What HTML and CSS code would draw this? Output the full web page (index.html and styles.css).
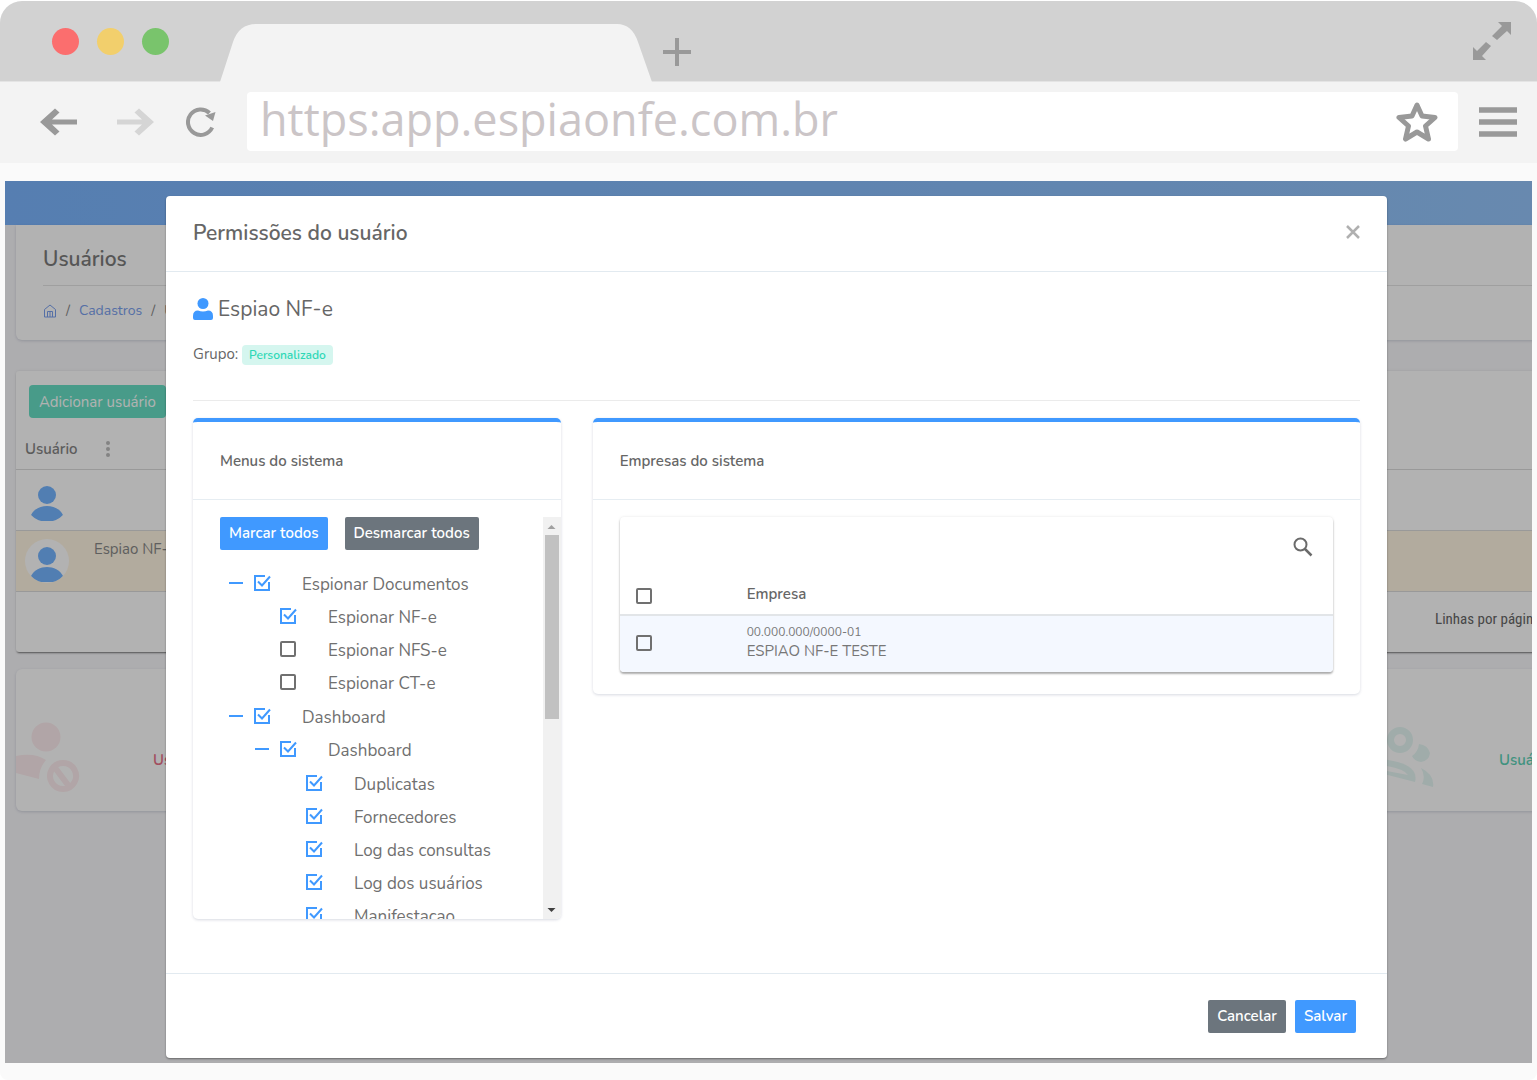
FILE: index.html
```html
<!DOCTYPE html>
<html lang="pt-BR">
<head>
<meta charset="utf-8">
<title>Permissões do usuário</title>
<link rel="stylesheet" href="styles.css">
</head>
<body>
<svg class="defs" aria-hidden="true">
  <symbol id="person" viewBox="0 0 44 44">
    <circle cx="22" cy="17" r="9"/>
    <path d="M6 37C12 25 32 25 38 37C35 41 32 43 28 43H16C12 43 9 41 6 37Z"/>
  </symbol>
</svg>

<div class="browser">
  <div class="tabstrip">
    <span class="dot dot-red"></span>
    <span class="dot dot-yellow"></span>
    <span class="dot dot-green"></span>
    <svg class="tab" viewBox="0 0 432 58"><path d="M0 58L13 18Q19 0 36 0H397Q412 0 418 18L432 58Z"/></svg>
    <button class="chrome-btn plus" aria-label="Nova aba">
      <svg width="28" height="28" viewBox="0 0 28 28"><path d="M14 0V28M0 14H28" stroke="#999" stroke-width="4"/></svg>
    </button>
    <button class="chrome-btn expand" aria-label="Tela cheia">
      <svg width="38" height="38" viewBox="0 0 38 38" fill="#999"><path d="M25 0H38V13L34 9L24 18L19 14L29 4Z"/><path d="M13 38H0V25L4 29L13 20L18 24L9 34Z"/></svg>
    </button>
  </div>

  <div class="toolbar">
    <button class="chrome-btn" aria-label="Voltar">
      <svg width="37" height="28" viewBox="0 0 37 28"><path d="M0 14L15 0.500L19.500 4.500L12 11.500H37V16.500H12L19.500 23.500L15 27.500Z" fill="#999"/></svg>
    </button>
    <button class="chrome-btn forward" aria-label="Avançar">
      <svg width="37" height="28" viewBox="0 0 37 28"><path d="M37 14L22 0.500L17.500 4.500L25 11.500H0V16.500H25L17.500 23.500L22 27.500Z" fill="#d5d5d5"/></svg>
    </button>
    <button class="chrome-btn reload" aria-label="Recarregar">
      <svg width="30" height="30" viewBox="0 0 30 30"><path d="M26.200 20.500A12.700 12.700 0 1 1 23.500 6" fill="none" stroke="#999" stroke-width="4"/><path d="M29.500 5L27 14L19 8.500Z" fill="#999"/></svg>
    </button>
    <div class="address">
      <input class="url" type="text" value="https:app.espiaonfe.com.br" aria-label="Endereço">
      <svg width="42" height="41" viewBox="0 0 42 41"><path d="M21 4L26 15L39 16.500L29.500 25L32.500 38L21 31L9.500 38L12.500 25L3 16.500L16 15Z" fill="none" stroke="#999" stroke-width="5" stroke-linejoin="round"/></svg>
    </div>
    <button class="chrome-btn menu" aria-label="Menu">
      <svg width="38" height="30" viewBox="0 0 38 30"><path d="M0 3H38M0 15H38M0 27H38" stroke="#999" stroke-width="5.500"/></svg>
    </button>
  </div>

  <div class="viewport">
    <div class="app">
      <header class="topbar"></header>
      <main class="page">
        <section class="panel page-head">
          <h1>Usuários</h1>
          <nav class="crumbs">
            <a href="#" aria-label="Início"><svg width="14" height="14" viewBox="0 0 14 14" fill="none" stroke="currentColor" stroke-linejoin="round"><path d="M1.500 5.500L7 1L12.500 5.500V13H1.500ZM4.500 13V7.500H9.500V13M7 8V13"/></svg></a>
            <span>/</span><a href="#">Cadastros</a><span>/</span><span>Usuários</span>
          </nav>
        </section>

        <section class="panel users">
          <button class="add">Adicionar usuário</button>
          <div class="users-head">
            <span>Usuário</span>
            <svg width="4" height="16" viewBox="0 0 4 16" fill="#bcbcbc"><circle cx="2" cy="2" r="2"/><circle cx="2" cy="8" r="2"/><circle cx="2" cy="14" r="2"/></svg>
          </div>
          <div class="user-row">
            <svg class="avatar"><use href="#person"/></svg>
          </div>
          <div class="user-row selected">
            <svg class="avatar"><use href="#person"/></svg>
            <span>Espiao NF-e</span>
          </div>
          <div class="pager">Linhas por página</div>
        </section>

        <section class="stats">
          <article class="panel stat stat-red">
            <svg width="64" height="72" viewBox="0 0 64 72" fill="currentColor"><circle cx="30" cy="15" r="14.500"/><path d="M0 34Q18 30 30 38Q23 46 23 57L0 51Z"/><path d="M37 43L55 67M47 41A13 13 0 1 0 47.100 41Z" fill="none" stroke="currentColor" stroke-width="6"/></svg>
            <span>Usuários bloqueados</span>
          </article>
          <article class="panel stat stat-green">
            <svg width="72" height="62" viewBox="0 0 72 62" fill="currentColor"><circle cx="38" cy="13" r="9.500" fill="none" stroke="currentColor" stroke-width="7"/><path d="M57 17Q66 18 68 26Q67 34 59 35Q52 34 50 29Q56 25 57 17Z"/><path d="M18 32Q58 36 53 55L18 46Z"/><path d="M25 39Q42 42 46 48L25 44Z" fill="#fff"/><path d="M59 41Q73 48 71 60L60 57Q64 49 59 41Z"/></svg>
            <span>Usuários ativos</span>
          </article>
        </section>
      </main>
    </div>

    <div class="overlay">
      <div class="modal" role="dialog" aria-labelledby="modal-title">
        <header class="modal-head">
          <h2 id="modal-title">Permissões do usuário</h2>
          <button class="close" aria-label="Fechar"><svg width="14" height="14" viewBox="0 0 14 14"><path d="M1 1L13 13M13 1L1 13" stroke="#b0b0b0" stroke-width="2.500"/></svg></button>
        </header>

        <div class="modal-body">
          <h3 class="user-name">
            <svg width="20" height="22" viewBox="0 0 20 22" fill="#4099ff"><circle cx="10" cy="5.500" r="5.500"/><path d="M0 20V18Q0 12.500 5 12.500Q10 14.500 15 12.500Q20 12.500 20 18V20Q20 22 18 22H2Q0 22 0 20Z"/></svg>
            Espiao NF-e
          </h3>
          <p class="group">Grupo: <span class="badge">Personalizado</span></p>
          <hr>

          <div class="columns">
            <section class="card menus">
              <h4>Menus do sistema</h4>
              <div class="scroller">
                <div class="scroll-content">
                  <div class="actions">
                    <button class="btn primary">Marcar todos</button>
                    <button class="btn secondary">Desmarcar todos</button>
                  </div>
                  <ul class="tree">
                    <li>
                      <div class="node"><button class="toggle" aria-label="Recolher"></button><label><input type="checkbox" checked>Espionar Documentos</label></div>
                      <ul>
                        <li><div class="node leaf"><label><input type="checkbox" checked>Espionar NF-e</label></div></li>
                        <li><div class="node leaf"><label><input type="checkbox">Espionar NFS-e</label></div></li>
                        <li><div class="node leaf"><label><input type="checkbox">Espionar CT-e</label></div></li>
                      </ul>
                    </li>
                    <li>
                      <div class="node"><button class="toggle" aria-label="Recolher"></button><label><input type="checkbox" checked>Dashboard</label></div>
                      <ul>
                        <li>
                          <div class="node"><button class="toggle" aria-label="Recolher"></button><label><input type="checkbox" checked>Dashboard</label></div>
                          <ul>
                            <li><div class="node leaf"><label><input type="checkbox" checked>Duplicatas</label></div></li>
                            <li><div class="node leaf"><label><input type="checkbox" checked>Fornecedores</label></div></li>
                            <li><div class="node leaf"><label><input type="checkbox" checked>Log das consultas</label></div></li>
                            <li><div class="node leaf"><label><input type="checkbox" checked>Log dos usuários</label></div></li>
                            <li><div class="node leaf"><label><input type="checkbox" checked>Manifestacao</label></div></li>
                          </ul>
                        </li>
                      </ul>
                    </li>
                  </ul>
                </div>
                <div class="scrollbar" aria-hidden="true">
                  <svg width="17" height="17" viewBox="0 0 17 17"><path d="M4.500 12L8.500 8L12.500 12Z" fill="#a0a0a0"/></svg>
                  <span class="thumb"></span>
                  <svg width="17" height="17" viewBox="0 0 17 17"><path d="M4.500 6L8.500 10L12.500 6Z" fill="#404040"/></svg>
                </div>
              </div>
            </section>

            <section class="card companies">
              <h4>Empresas do sistema</h4>
              <div class="table-card">
                <div class="table-tools">
                  <button class="search" aria-label="Pesquisar"><svg width="20" height="20" viewBox="0 0 20 20" fill="none" stroke="#6b6b6b" stroke-width="2"><circle cx="7.500" cy="7.500" r="6"/><path d="M12 12L18.500 18.500" stroke-width="2.500"/></svg></button>
                </div>
                <table>
                  <thead>
                    <tr><th class="pick"><input type="checkbox" aria-label="Selecionar todas"></th><th>Empresa</th></tr>
                  </thead>
                  <tbody>
                    <tr><td class="pick"><input type="checkbox" aria-label="Selecionar ESPIAO NF-E TESTE"></td><td><small>00.000.000/0000-01</small>ESPIAO NF-E TESTE</td></tr>
                  </tbody>
                </table>
              </div>
            </section>
          </div>
        </div>

        <footer class="modal-foot">
          <button class="btn secondary">Cancelar</button>
          <button class="btn primary">Salvar</button>
        </footer>
      </div>
    </div>
  </div>
</div>
</body>
</html>
```
FILE: styles.css
```css
* { box-sizing: border-box; }

body {
  margin: 0;
  background: #fff;
  color: #666;
  font: 400 15px/20px Nunito, Lato, "Open Sans", sans-serif;
}

h1, h2, h3, h4, p, ul { margin: 0; padding: 0; }
ul { list-style: none; }
button, input { font: inherit; margin: 0; }
button { border: 0; padding: 0; background: none; cursor: pointer; }
a { color: #7aa0ee; text-decoration: none; }
svg { display: block; flex: none; }
.defs { display: none; }

/* Browser frame */
.browser {
  margin-top: 1px;
  background: #fafafa;
  border-radius: 22px 22px 8px 8px;
  overflow: hidden;
}

.tabstrip {
  display: flex;
  align-items: center;
  height: 81px;
  padding: 0 26px 0 52px;
  background: #d2d2d2;
  border-bottom: 1px solid #e4e4e4;
}
.dot { width: 27px; height: 27px; margin-right: 18px; border-radius: 50%; }
.dot-red { background: #fb6e6e; }
.dot-yellow { background: #f2cf6c; }
.dot-green { background: #79c46c; }
.tab { width: 432px; height: 58px; margin: 0 0 -1px 33px; align-self: flex-end; fill: #f3f3f3; }
.plus { margin: 22px 0 0 11px; }
.expand { margin-left: auto; }

.toolbar {
  display: flex;
  align-items: center;
  height: 81px;
  padding: 0 20px 2px 40px;
  background: #f3f3f3;
}
.forward { margin-left: 40px; }
.reload { margin-left: 32px; }
.address {
  display: flex;
  flex: 1;
  align-items: center;
  height: 59px;
  margin: 0 21px 0 31px;
  padding: 0 20px 0 13px;
  background: #fff;
  border-radius: 4px;
}
.url {
  flex: 1;
  min-width: 0;
  height: 59px;
  padding: 0 0 6px;
  border: 0;
  outline: 0;
  background: none;
  color: #cbc5c7;
  font-family: "Open Sans", "Noto Sans", sans-serif;
  font-size: 45px;
}

/* Page and overlay share one cell, so the page is as tall as the dialog needs */
.viewport { display: grid; margin: 18px 5px 17px; overflow: hidden; }
.app, .overlay { grid-area: 1 / 1; min-width: 0; }
.app { background: #f8f8fb; overflow: hidden; }
.topbar { height: 44px; background: linear-gradient(90deg, #7bb5fe, #95c5fb); }
.page { margin-right: -16px; padding-left: 11px; }
.panel { background: #fff; border-radius: 6px; box-shadow: 0 1px 3px rgba(60, 70, 110, .2); }

.page-head { padding: 18px 0 19px 27px; border-radius: 0 0 6px 6px; }
.page-head h1 { padding-bottom: 10px; border-bottom: 1px solid #e4e4e4; font: 600 21px/32px Nunito, Lato, sans-serif; color: #7c7c7c; }
.crumbs { display: flex; align-items: center; gap: 9px; padding-top: 15px; font-size: 14px; color: #888; }

.users { margin-top: 31px; padding-top: 14px; border-radius: 3px; box-shadow: 0 2px 2px -1px rgba(0, 0, 0, .5), 0 0 3px rgba(0, 0, 0, .1); }
.add {
  display: block;
  height: 33px;
  margin-left: 13px;
  padding: 0 10px;
  border-radius: 4px;
  background: #67dfc5;
  color: #fff;
}
.users-head {
  display: flex;
  align-items: center;
  gap: 28px;
  height: 52px;
  padding: 10px 0 0 9px;
  border-bottom: 1px solid #dcdcdc;
  font-weight: 600;
  color: #858585;
}
.user-row {
  display: flex;
  gap: 25px;
  height: 61px;
  padding: 8px 0 0 9px;
  border-bottom: 1px solid #dcdcdc;
  color: #888;
}
.selected { background: #fff5e2; }
.avatar { width: 44px; height: 44px; border-radius: 50%; background: #fff; fill: #75b5ff; }
.pager {
  height: 60px;
  padding: 16px 0 0;
  margin-left: calc(100% - 113px);
  white-space: nowrap;
  color: #666;
  font: 15px/22px "Roboto Condensed", "Liberation Sans Narrow", sans-serif;
}

.stats { display: flex; gap: 16px; margin-top: 17px; }
.stat { display: flex; align-items: center; height: 142px; overflow: hidden; white-space: nowrap; font-weight: 600; }
.stat span { padding-top: 40px; }
.stat svg { margin-top: 36px; }
.stat-red { flex: 1; gap: 73px; color: #e87088; }
.stat-red svg { color: #feedef; }
.stat-green { flex: 0 0 186px; gap: 65px; color: #5cd2b6; }
.stat-green svg { color: #e6f7f4; }

/* Dialog */
.overlay { z-index: 1; padding: 15px 145px 5px 161px; background: rgba(0, 0, 0, .3); }
.modal { background: #fff; border-radius: 4px; box-shadow: 0 1px 2px rgba(0, 0, 0, .4); }
.modal-head {
  display: flex;
  align-items: center;
  justify-content: space-between;
  height: 76px;
  padding: 0 27px 2px;
  border-bottom: 1px solid #e2eaf0;
}
.modal-head h2 { font-size: 21px; font-weight: 600; line-height: 32px; }
.close { padding-bottom: 2px; }
.modal-body { padding: 21px 27px 54px; }
.user-name { display: flex; align-items: center; gap: 5px; font-size: 21px; font-weight: 400; line-height: 32px; }
.group { margin-top: 18px; line-height: 22px; }
.badge {
  display: inline-block;
  padding: 0 7px;
  border-radius: 4px;
  background: #d5f6ef;
  color: #2ed8b6;
  font-size: 12px;
  font-weight: 600;
  line-height: 20px;
}
hr { margin: 35px 0 17px; border: 0; border-top: 1px solid #ebebeb; }

.columns { display: grid; grid-template-columns: repeat(12, 1fr); gap: 32px; align-items: start; }
.card {
  min-width: 0;
  border-top: 4px solid #4099ff;
  border-radius: 5px;
  box-shadow: 0 1px 3px rgba(60, 70, 110, .2);
}
.card h4 { height: 78px; padding: 29px 27px 0; border-bottom: 1px solid #e6edf2; font-size: 15px; font-weight: 600; line-height: 20px; }
.menus { grid-column: span 4; }
.companies { grid-column: span 8; padding-bottom: 22px; }

.scroller { display: flex; height: 402px; margin-top: 17px; overflow: hidden; border-radius: 0 0 5px 5px; }
.scroll-content { flex: 1; min-width: 0; padding-left: 27px; }
.actions { display: flex; gap: 17px; margin-bottom: 17px; }
.btn { height: 33px; padding: 0 9px 1px; border-radius: 2px; color: #fff; font-weight: 600; white-space: nowrap; }
.primary { background: #4099ff; }
.secondary { background: #6c757d; }

.tree > li + li, .tree ul ul { margin-top: 1px; }
.tree ul { padding-left: 26px; }
.node { display: flex; align-items: center; height: 33px; padding-top: 2px; font-size: 17px; color: #707070; }
.node.leaf { padding-left: 33px; }
.toggle { width: 14px; height: 2px; margin: 0 10px 3px 9px; background: #4099ff; }
.node label { display: flex; align-items: center; gap: 31px; white-space: nowrap; }

input[type="checkbox"] {
  appearance: none;
  display: block;
  flex: none;
  width: 18px;
  height: 18px;
  background: center / 18px 18px no-repeat;
  background-image: url("data:image/svg+xml,%3Csvg xmlns='http://www.w3.org/2000/svg' viewBox='0 0 18 18'%3E%3Crect x='2' y='2' width='14' height='14' rx='1' fill='none' stroke='%23707070' stroke-width='2'/%3E%3C/svg%3E");
}
input[type="checkbox"]:checked { background-image: url("data:image/svg+xml,%3Csvg xmlns='http://www.w3.org/2000/svg' viewBox='0 0 18 18' fill='none' stroke='%234099ff' stroke-width='2'%3E%3Cpath d='M12 2H2V16H16V8M5 7.500L9 11.500L17 2.500'/%3E%3C/svg%3E"); }
.node input[type="checkbox"] { margin-bottom: 4px; }

.scrollbar { display: flex; flex-direction: column; width: 18px; background: #f1f1f1; }
.thumb { height: 184px; margin: 1px 2px auto; background: #c1c1c1; }

.table-card { margin: 17px 27px 0; border-radius: 4px; overflow: hidden; box-shadow: 0 2px 2px rgba(0, 0, 0, .3), 0 0 3px rgba(0, 0, 0, .1); }
.table-tools { display: flex; justify-content: flex-end; height: 56px; padding: 20px 20px 0 0; }
.search { height: 20px; }
table { width: 100%; border-collapse: collapse; }
th, td { padding: 0; text-align: left; vertical-align: middle; }
th { height: 42px; border-bottom: 2px solid #e2e5e8; font-weight: 600; line-height: 20px; }
td { height: 57px; padding-bottom: 4px; background: #f4f8ff; line-height: 20px; color: #777; }
td small { display: block; font-size: 12px; line-height: 18px; }
.pick { width: 127px; padding-left: 15px; }
th.pick { padding-top: 4px; }
td.pick { padding-bottom: 2px; }

.modal-foot {
  display: flex;
  justify-content: flex-end;
  gap: 9px;
  padding: 26px 31px 25px;
  border-top: 1px solid #e2eaf0;
}
```
